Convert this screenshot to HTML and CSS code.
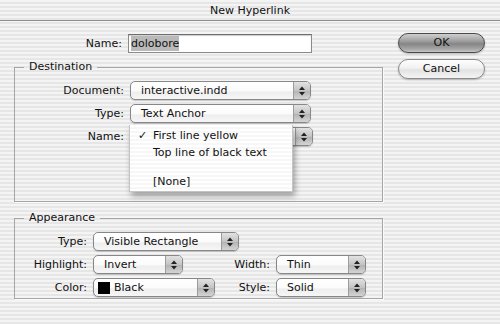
FILE: index.html
```html
<!DOCTYPE html>
<html lang="en">
<head>
  <meta charset="UTF-8">
  <title>New Hyperlink</title>
  <link rel="stylesheet" href="styles.css">
</head>
<body>
  <div class="window">
    <div class="titlebar">New Hyperlink</div>

    <div class="content">
      <div class="main">

        <div class="name-row">
          <span class="label">Name:</span>
          <div class="textfield"><span class="selected">dolobore</span></div>
        </div>

        <fieldset class="group dest">
          <legend>Destination</legend>
          <div class="rows">
            <div class="row">
              <span class="label">Document:</span>
              <div class="popup w180">
                <span class="value">interactive.indd</span>
                <span class="arrows"><svg width="6" height="10" viewBox="0 0 6 10"><polygon points="0,4 3,0.5 6,4" /><polygon points="0,6 3,9.5 6,6" /></svg></span>
              </div>
            </div>
            <div class="row">
              <span class="label">Type:</span>
              <div class="popup w180">
                <span class="value">Text Anchor</span>
                <span class="arrows"><svg width="6" height="10" viewBox="0 0 6 10"><polygon points="0,4 3,0.5 6,4" /><polygon points="0,6 3,9.5 6,6" /></svg></span>
              </div>
            </div>
            <div class="row">
              <span class="label">Name:</span>
              <div class="popup w182 open">
                <span class="value"></span>
                <span class="arrows"><svg width="6" height="10" viewBox="0 0 6 10"><polygon points="0,4 3,0.5 6,4" /><polygon points="0,6 3,9.5 6,6" /></svg></span>

                <!-- the open menu of the Name popup -->
                <ul class="menu">
                  <li class="checked"><span class="check">&#10003;</span>First line yellow</li>
                  <li>Top line of black text</li>
                  <li class="sep"></li>
                  <li>[None]</li>
                </ul>
              </div>
            </div>
          </div>
        </fieldset>

        <fieldset class="group appear">
          <legend>Appearance</legend>
          <div class="rows">
            <div class="row">
              <span class="label short">Type:</span>
              <div class="popup w146">
                <span class="value">Visible Rectangle</span>
                <span class="arrows"><svg width="6" height="10" viewBox="0 0 6 10"><polygon points="0,4 3,0.5 6,4" /><polygon points="0,6 3,9.5 6,6" /></svg></span>
              </div>
            </div>
            <div class="row">
              <span class="label short">Highlight:</span>
              <div class="popup w90">
                <span class="value">Invert</span>
                <span class="arrows"><svg width="6" height="10" viewBox="0 0 6 10"><polygon points="0,4 3,0.5 6,4" /><polygon points="0,6 3,9.5 6,6" /></svg></span>
              </div>
              <span class="label second">Width:</span>
              <div class="popup w90">
                <span class="value">Thin</span>
                <span class="arrows"><svg width="6" height="10" viewBox="0 0 6 10"><polygon points="0,4 3,0.5 6,4" /><polygon points="0,6 3,9.5 6,6" /></svg></span>
              </div>
            </div>
            <div class="row">
              <span class="label short">Color:</span>
              <div class="popup w122">
                <span class="value swatch-value"><span class="swatch"></span>Black</span>
                <span class="arrows"><svg width="6" height="10" viewBox="0 0 6 10"><polygon points="0,4 3,0.5 6,4" /><polygon points="0,6 3,9.5 6,6" /></svg></span>
              </div>
              <span class="label second narrow">Style:</span>
              <div class="popup w90">
                <span class="value">Solid</span>
                <span class="arrows"><svg width="6" height="10" viewBox="0 0 6 10"><polygon points="0,4 3,0.5 6,4" /><polygon points="0,6 3,9.5 6,6" /></svg></span>
              </div>
            </div>
          </div>
        </fieldset>

      </div>

      <div class="buttons">
        <div class="button default">OK</div>
        <div class="button">Cancel</div>
      </div>
    </div>
  </div>
</body>
</html>
```

FILE: styles.css
```css
* {
  box-sizing: border-box;
}

/* Aqua pinstripe background */
body {
  margin: 0;
  font-family: "DejaVu Sans", Verdana, sans-serif;
  font-size: 11px;
  color: #111;
  background: repeating-linear-gradient(to bottom, #f4f4f4 0 2px, #e6e6e6 2px 4px);
}

.window {
  width: 500px;
  height: 324px;
}

/* Title bar */
.titlebar {
  height: 21px;
  line-height: 21px;
  text-align: center;
  font-size: 11px;
  border-bottom: 1px solid #8e8e8e;
}

.content {
  display: flex;
}

.main {
  width: 398px;
  padding-left: 14px;
  padding-top: 13px;
}

/* Name field at the top */
.name-row {
  display: flex;
  align-items: center;
  height: 19px;
}

.name-row .label {
  width: 108px;
  text-align: right;
  margin-right: 6px;
}

.textfield {
  width: 184px;
  height: 19px;
  background: #fff;
  border: 1px solid #8a8a8a;
  border-top-color: #6e6e6e;
  box-shadow: inset 0 1px 1px rgba(0, 0, 0, 0.2);
  padding: 1px 2px;
  line-height: 15px;
}

.selected {
  background-color: #b9b9b9;
  padding: 1px 0;
}

/* Group boxes */
.group {
  margin: 7px 0 0 0;
  padding: 0;
  width: 369px;
  min-width: 0;
  border: 1px solid #a6a6a6;
  box-shadow: 1px 1px 0 #fafafa;
}

.group legend {
  margin-left: 9px;
  padding: 0 5px;
  line-height: 14px;
  font-size: 11px;
}

.group .rows {
  padding-top: 7px;
  display: flex;
  flex-direction: column;
  gap: 4px;
}

.dest {
  padding-bottom: 55px;
}

.appear {
  margin-top: 9px;
  padding-bottom: 1px;
}

.row {
  display: flex;
  align-items: center;
  height: 19px;
}

.row .label {
  width: 109px;
  text-align: right;
  margin-right: 6px;
}

.row .label.short {
  width: 72px;
}

.row .label.second {
  width: 87px;
}

.row .label.narrow {
  width: 55px;
}

/* Popup menus */
.popup {
  position: relative;
  display: flex;
  height: 19px;
  border: 1px solid #878787;
  border-radius: 5px;
  background: linear-gradient(to bottom, #ffffff 0%, #fbfbfb 50%, #eeeeee 60%, #f6f6f6 100%);
  box-shadow: 0 1px 1px rgba(0, 0, 0, 0.18);
}

.w180 { width: 181px; }
.w182 { width: 183px; }
.w146 { width: 146px; }
.w122 { width: 122px; }
.w90 { width: 90px; }

.popup .value {
  flex: 1;
  padding-left: 10px;
  line-height: 17px;
  white-space: nowrap;
  overflow: hidden;
}

.swatch-value {
  display: flex;
  align-items: center;
}

.popup .swatch-value {
  padding-left: 4px;
}

.swatch {
  display: inline-block;
  width: 12px;
  height: 12px;
  background: #000;
  margin-right: 4px;
}

.arrows {
  width: 17px;
  display: flex;
  align-items: center;
  justify-content: center;
  border-left: 1px solid #9c9c9c;
  border-radius: 0 4px 4px 0;
  background: linear-gradient(to bottom, #e2e2e2 0%, #c4c4c4 50%, #b4b4b4 55%, #d4d4d4 100%);
}

.arrows svg {
  fill: #222;
}

/* The open Name menu */
.menu {
  position: absolute;
  top: -3px;
  left: -2px;
  width: 164px;
  margin: 0;
  padding: 2px 0 1px 0;
  list-style: none;
  background: repeating-linear-gradient(to bottom, #ffffff 0 2px, #f7f7f7 2px 4px);
  border: 1px solid #c4c4c4;
  border-top: none;
  box-shadow: 2px 4px 6px rgba(0, 0, 0, 0.35);
  z-index: 2;
}

.menu li {
  height: 17px;
  line-height: 17px;
  padding-left: 23px;
  position: relative;
}

.menu li.sep {
  height: 12px;
}

.menu .check {
  position: absolute;
  left: 8px;
  top: 0;
}

/* Buttons on the right */
.buttons {
  padding-top: 12px;
  display: flex;
  flex-direction: column;
  gap: 6px;
}

.button {
  width: 87px;
  height: 20px;
  line-height: 18px;
  text-align: center;
  border-radius: 10px;
  border: 1px solid #8a8a8a;
  background: linear-gradient(to bottom, #fdfdfd 0%, #f1f1f1 45%, #e2e2e2 55%, #f4f4f4 100%);
  box-shadow: 0 1px 2px rgba(0, 0, 0, 0.25);
}

.button.default {
  border-color: #4a4a4a;
  background: linear-gradient(to bottom, #cfcfcf 0%, #9e9e9e 40%, #858585 55%, #a8a8a8 85%, #c6c6c6 100%);
}
```
